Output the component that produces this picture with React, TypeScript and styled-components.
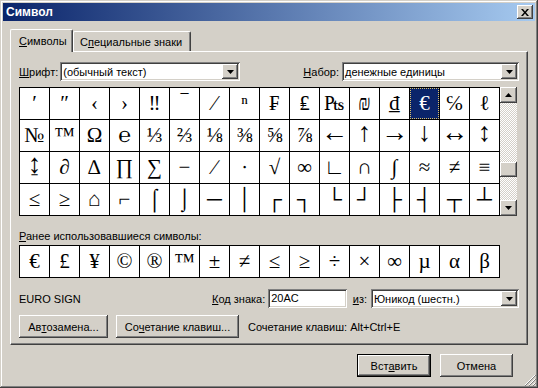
import * as React from 'react';
import styled, { createGlobalStyle, css } from 'styled-components';

const face = '#d4d0c8';
const uiFont = `"Liberation Sans", Arial, sans-serif`;
const symFont = `"Liberation Serif", "DejaVu Serif", serif`;

const raised = css`
    box-shadow: inset -1px -1px #404040, inset 1px 1px #ffffff, inset -2px -2px #808080, inset 2px 2px ${face};
`;

const sunken = css`
    box-shadow: inset 1px 1px #808080, inset -1px -1px #ffffff, inset 2px 2px #404040, inset -2px -2px ${face};
`;

const GlobalStyle = createGlobalStyle`
    html, body {
        margin: 0;
        padding: 0;
        background: ${face};
    }
    body {
        font-family: ${uiFont};
        font-size: 11px;
        color: #000;
    }
`;

const Window = styled.div`
    position: relative;
    width: 538px;
    height: 388px;
    box-sizing: border-box;
    padding: 3px;
    background: ${face};
    box-shadow: inset -1px -1px #404040, inset 1px 1px ${face}, inset -2px -2px #808080, inset 2px 2px #ffffff;
    display: flex;
    flex-direction: column;
`;

const TitleBar = styled.div`
    height: 18px;
    display: flex;
    align-items: center;
    justify-content: space-between;
    padding: 0 2px 0 3px;
    background: linear-gradient(to right, #0a246a, #a6caf0);
`;

const TitleText = styled.span`
    color: #fff;
    font-weight: bold;
    font-size: 12px;
`;

const CaptionButton = styled.div`
    width: 16px;
    height: 14px;
    background: ${face};
    ${raised};
    display: flex;
    align-items: center;
    justify-content: center;
`;

const TabStrip = styled.div`
    display: flex;
    align-items: flex-end;
    height: 22px;
    margin: 8px 0 0 7px;
`;

const Tab = styled.div<{ $active?: boolean }>`
    position: relative;
    z-index: 1;
    box-sizing: border-box;
    height: ${p => (p.$active ? 23 : 20)}px;
    width: ${p => (p.$active ? 63 : 118)}px;
    margin-bottom: ${p => (p.$active ? -1 : 0)}px;
    padding: ${p => (p.$active ? '5px 0 0 8px' : '4px 0 0 6px')};
    background: ${face};
    border-top: 1px solid #fff;
    border-left: 1px solid #fff;
    border-right: 1px solid #404040;
    border-radius: 2px 2px 0 0;
    box-shadow: inset -1px 0 #808080;
`;

const Panel = styled.div`
    box-sizing: border-box;
    width: 518px;
    height: 294px;
    margin-left: 7px;
    padding: 10px 8px 0 8px;
    background: ${face};
    border-top: 1px solid #fff;
    border-left: 1px solid #fff;
    border-right: 1px solid #404040;
    border-bottom: 1px solid #404040;
    box-shadow: inset -1px -1px #808080;
    display: flex;
    flex-direction: column;
`;

const FieldRow = styled.div`
    display: flex;
    align-items: center;
    height: 19px;
`;

const Label = styled.span<{ $gap?: number }>`
    margin-right: ${p => p.$gap ?? 3}px;
    white-space: nowrap;
`;

const Accel = styled.span`
    text-decoration: underline;
`;

const Spacer = styled.div`
    flex: 1;
`;

const Combo = styled.div<{ $w: number }>`
    box-sizing: border-box;
    width: ${p => p.$w}px;
    height: 19px;
    padding: 2px;
    background: #fff;
    ${sunken};
    display: flex;
    align-items: center;
`;

const ComboText = styled.span`
    flex: 1;
    padding-left: 1px;
    white-space: nowrap;
`;

const DropButton = styled.div`
    width: 16px;
    height: 15px;
    background: ${face};
    ${raised};
    display: flex;
    align-items: center;
    justify-content: center;
`;

const TextInput = styled.div<{ $w: number }>`
    box-sizing: border-box;
    width: ${p => p.$w}px;
    height: 19px;
    padding: 3px 3px;
    background: #fff;
    ${sunken};
`;

const GridArea = styled.div`
    display: flex;
    margin-top: 6px;
`;

const SymbolGrid = styled.div<{ $rows: number }>`
    display: grid;
    grid-template-columns: repeat(16, 29px);
    grid-template-rows: repeat(${p => p.$rows}, 31px);
    gap: 1px;
    padding: 1px;
    background: #000;
    width: max-content;
`;

const Cell = styled.div<{ $selected?: boolean; $big?: boolean }>`
    box-sizing: border-box;
    display: flex;
    align-items: center;
    justify-content: center;
    font-family: ${symFont};
    font-size: ${p => (p.$big ? 27 : 21)}px;
    line-height: 1;
    padding-bottom: ${p => (p.$big ? 6 : 0)}px;
    background: ${p => (p.$selected ? '#0a246a' : '#fff')};
    color: ${p => (p.$selected ? '#fff' : '#000')};
    outline: ${p => (p.$selected ? '1px dotted #d8c070' : 'none')};
    outline-offset: -1px;
`;

const ScrollBar = styled.div`
    width: 17px;
    height: 129px;
    display: flex;
    flex-direction: column;
`;

const ScrollButton = styled.div`
    width: 17px;
    height: 16px;
    flex: none;
    background: ${face};
    ${raised};
    display: flex;
    align-items: center;
    justify-content: center;
`;

const Track = styled.div<{ $h?: number }>`
    flex: ${p => (p.$h ? `0 0 ${p.$h}px` : '1')};
    background: repeating-conic-gradient(#ffffff 0 25%, ${face} 0 50%) 0 0 / 2px 2px;
`;

const Thumb = styled.div`
    height: 15px;
    flex: none;
    background: ${face};
    ${raised};
`;

const SectionLabel = styled.div`
    margin-top: 13px;
    height: 14px;
    line-height: 14px;
`;

const RecentWrap = styled.div`
    margin-top: 2px;
`;

const InfoRow = styled(FieldRow)`
    margin-top: 11px;
`;

const CharName = styled.span`
    width: 193px;
`;

const ButtonRow = styled.div`
    display: flex;
    align-items: center;
    margin-top: 7px;
    gap: 8px;
`;

const PushButton = styled.div<{ $w: number; $default?: boolean }>`
    box-sizing: border-box;
    width: ${p => p.$w}px;
    height: 23px;
    display: flex;
    align-items: center;
    justify-content: center;
    background: ${face};
    white-space: nowrap;
    ${p => (p.$default
        ? css`
            border: 1px solid #000;
            box-shadow: inset -1px -1px #404040, inset 1px 1px #ffffff, inset -2px -2px #808080, inset 2px 2px ${face};
        `
        : raised)};
`;

const StatusText = styled.span`
    margin-left: 1px;
`;

const Footer = styled.div`
    display: flex;
    justify-content: flex-end;
    gap: 9px;
    margin: 9px 22px 0 0;
`;

const Grip = styled.svg`
    position: absolute;
    right: 2px;
    bottom: 2px;
`;

const rows = [
    ['′', '″', '‹', '›', '‼', '‾', '⁄', 'ⁿ', '₣', '₤', '₧', '₪', '₫', '€', '℅', 'ℓ'],
    ['№', '™', 'Ω', '℮', '⅓', '⅔', '⅛', '⅜', '⅝', '⅞', '←', '↑', '→', '↓', '↔', '↕'],
    ['↨', '∂', '∆', '∏', '∑', '−', '∕', '∙', '√', '∞', '∟', '∩', '∫', '≈', '≠', '≡'],
    ['≤', '≥', '⌂', '⌐', '⌠', '⌡', '─', '│', '┌', '┐', '└', '┘', '├', '┤', '┬', '┴'],
];

// arrows are drawn much longer in the original symbol font
const bigChars = '←↑→↓↔↕↨';

const recent = ['€', '£', '¥', '©', '®', '™', '±', '≠', '≤', '≥', '÷', '×', '∞', 'µ', 'α', 'β'];

const Arrow = ({ up }: { up?: boolean }) => (
    <svg width="7" height="4" viewBox="0 0 7 4">
        <polygon points={up ? '3.5,0 7,4 0,4' : '0,0 7,0 3.5,4'} fill="#000" />
    </svg>
);

const DropDown = ({ w, text }: { w: number; text: string }) => (
    <Combo $w={w}>
        <ComboText>{text}</ComboText>
        <DropButton><Arrow /></DropButton>
    </Combo>
);

export default function App() {
    return (
        <Window>
            <GlobalStyle />
            <TitleBar>
                <TitleText>Символ</TitleText>
                <CaptionButton>
                    <svg width="8" height="7" viewBox="0 0 8 7">
                        <path d="M0 0h2l2 2.5L6 0h2L5 3.5 8 7H6L4 4.5 2 7H0l3-3.5z" fill="#000" />
                    </svg>
                </CaptionButton>
            </TitleBar>

            <TabStrip>
                <Tab $active><Accel>С</Accel>имволы</Tab>
                <Tab>С<Accel>п</Accel>ециальные знаки</Tab>
            </TabStrip>

            <Panel>
                <FieldRow>
                    <Label $gap={2}><Accel>Ш</Accel>рифт:</Label>
                    <DropDown w={180} text="(обычный текст)" />
                    <Spacer />
                    <Label $gap={3}><Accel>Н</Accel>абор:</Label>
                    <DropDown w={177} text="денежные единицы" />
                </FieldRow>

                <GridArea>
                    <SymbolGrid $rows={4}>
                        {rows.map((row, r) =>
                            row.map((ch, c) => (
                                <Cell
                                    key={`${r}-${c}`}
                                    $selected={r === 0 && c === 13}
                                    $big={bigChars.includes(ch)}
                                >
                                    {ch}
                                </Cell>
                            ))
                        )}
                    </SymbolGrid>
                    <ScrollBar>
                        <ScrollButton><Arrow up /></ScrollButton>
                        <Track $h={59} />
                        <Thumb />
                        <Track />
                        <ScrollButton><Arrow /></ScrollButton>
                    </ScrollBar>
                </GridArea>

                <SectionLabel><Accel>Р</Accel>анее использовавшиеся символы:</SectionLabel>
                <RecentWrap>
                    <SymbolGrid $rows={1}>
                        {recent.map((ch, i) => <Cell key={i}>{ch}</Cell>)}
                    </SymbolGrid>
                </RecentWrap>

                <InfoRow>
                    <CharName>EURO SIGN</CharName>
                    <Label $gap={3}><Accel>К</Accel>од знака:</Label>
                    <TextInput $w={79}>20AC</TextInput>
                    <Spacer />
                    <Label $gap={4}><Accel>и</Accel>з:</Label>
                    <DropDown w={148} text="Юникод (шестн.)" />
                </InfoRow>

                <ButtonRow>
                    <PushButton $w={89}>Ав<Accel>т</Accel>озамена...</PushButton>
                    <PushButton $w={123}>Со<Accel>ч</Accel>етание клавиш...</PushButton>
                    <StatusText>Сочетание клавиш: Alt+Ctrl+E</StatusText>
                </ButtonRow>
            </Panel>

            <Footer>
                <PushButton $w={74} $default>Вст<Accel>а</Accel>вить</PushButton>
                <PushButton $w={73}>Отмена</PushButton>
            </Footer>

            <Grip width="12" height="12" viewBox="0 0 12 12">
                <path d="M11 1L1 11M11 5L5 11M11 9L9 11" stroke="#fff" strokeWidth="1" />
                <path d="M12 1L1 12M12 5L5 12M12 9L9 12" stroke="#808080" strokeWidth="1" />
            </Grip>
        </Window>
    );
}
